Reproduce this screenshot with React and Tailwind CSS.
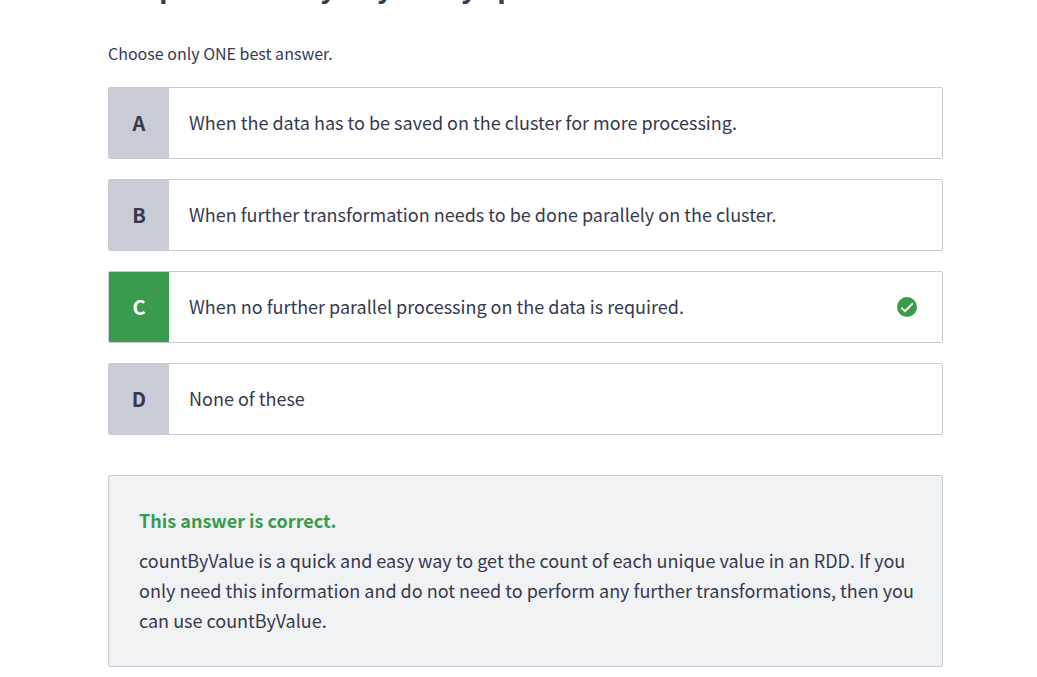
import React from "react";

const options = [
  { letter: "A", text: "When the data has to be saved on the cluster for more processing." },
  { letter: "B", text: "When further transformation needs to be done parallely on the cluster." },
  { letter: "C", text: "When no further parallel processing on the data is required.", correct: true },
  { letter: "D", text: "None of these" },
];

function CheckBadge() {
  return (
    <svg className="size-5 shrink-0" viewBox="0 0 20 20" role="img" aria-label="Correct answer">
      <circle cx="10" cy="10" r="10" fill="#399b4b" />
      <path d="M4.4 10.8 L8 14.2 L15.8 6.3" fill="none" stroke="#fff" strokeWidth="1.8" />
    </svg>
  );
}

function Option({ letter, text, correct }) {
  return (
    <li>
      <button
        type="button"
        className="flex h-18 w-full items-stretch overflow-hidden rounded-xs border border-[#c9cbd5] bg-white text-left"
      >
        <span
          className={
            correct
              ? "flex w-15 shrink-0 items-center justify-center bg-[#399b4b] text-[20px] font-bold text-white"
              : "flex w-15 shrink-0 items-center justify-center bg-[#c9cbd5] text-[20px] font-bold"
          }
        >
          {letter}
        </span>
        <span className="flex flex-1 items-center px-5 pb-0.5 text-[18px]">{text}</span>
        {correct && (
          <span className="flex items-center pr-[25px]">
            <CheckBadge />
          </span>
        )}
      </button>
    </li>
  );
}

export default function App() {
  return (
    <main className="overflow-hidden bg-white pr-[94px] pb-[10px] pl-[108px] font-['Noto_Sans_CJK_SC','Noto_Sans',sans-serif] text-[#37394d]">
      <h1 className="-mt-[33px] text-[28px] leading-[38px] font-bold whitespace-nowrap">
        In Spark identify any many specific
      </h1>
      <p className="mt-9 text-[16px] leading-6">Choose only ONE best answer.</p>
      <ul className="mt-[22px] flex flex-col gap-5">
        {options.map((o) => (
          <Option key={o.letter} {...o} />
        ))}
      </ul>
      <section className="mt-10 rounded-xs border border-[#c9cbd5] bg-[#f1f2f4] pt-[29px] pr-5 pb-[31px] pl-[30px]">
        <h2 className="text-[18px] leading-[30px] font-bold text-[#399b4b]">This answer is correct.</h2>
        <p className="mt-[10px] text-[18px] leading-[30px]">
          countByValue is a quick and easy way to get the count of each unique value in an RDD. If you only need this
          information and do not need to perform any further transformations, then you can use countByValue.
        </p>
      </section>
    </main>
  );
}
